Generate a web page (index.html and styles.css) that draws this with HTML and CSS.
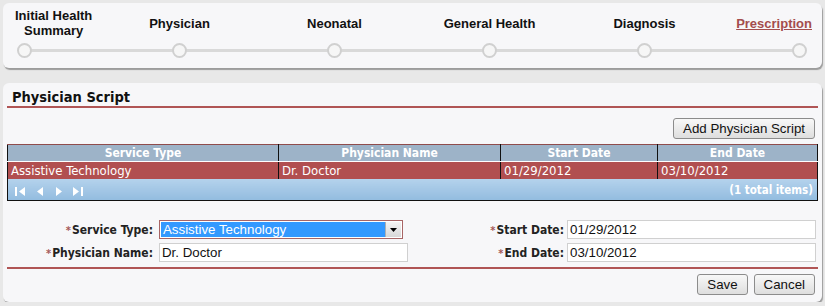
FILE: index.html
```html
<!DOCTYPE html>
<html lang="en">
<head>
    <meta charset="UTF-8">
    <title>Prescription</title>
    <link rel="stylesheet" href="styles.css">
</head>
<body>
    <div class="panel steps">
        <div class="step first">
            <span class="step-label">Initial Health<br>Summary</span>
            <span class="dot"></span>
        </div>
        <div class="step">
            <span class="step-label">Physician</span>
            <span class="dot"></span>
        </div>
        <div class="step">
            <span class="step-label">Neonatal</span>
            <span class="dot"></span>
        </div>
        <div class="step">
            <span class="step-label">General Health</span>
            <span class="dot"></span>
        </div>
        <div class="step">
            <span class="step-label">Diagnosis</span>
            <span class="dot"></span>
        </div>
        <div class="step last">
            <a class="step-label current" href="#">Prescription</a>
            <span class="dot"></span>
        </div>
    </div>

    <div class="panel script">
        <h2 class="section-title">Physician Script</h2>

        <div class="toolbar">
            <button class="btn">Add Physician Script</button>
        </div>

        <table class="grid">
            <thead>
                <tr>
                    <th class="col-type">Service Type</th>
                    <th class="col-name">Physician Name</th>
                    <th class="col-start">Start Date</th>
                    <th class="col-end">End Date</th>
                </tr>
            </thead>
            <tbody>
                <tr class="selected">
                    <td>Assistive Technology</td>
                    <td>Dr. Doctor</td>
                    <td>01/29/2012</td>
                    <td>03/10/2012</td>
                </tr>
            </tbody>
            <tfoot>
                <tr>
                    <td colspan="4">
                        <div class="pager">
                            <span class="pager-nav">
                                <svg width="11" height="9" viewBox="0 0 11 9"><rect x="0" y="0" width="2" height="9" fill="#fff"/><path d="M10 0 L10 9 L4 4.5 Z" fill="#fff"/></svg>
                                <svg width="7" height="9" viewBox="0 0 7 9"><path d="M6 0 L6 9 L0 4.5 Z" fill="#fff"/></svg>
                                <svg width="7" height="9" viewBox="0 0 7 9"><path d="M1 0 L1 9 L7 4.5 Z" fill="#fff"/></svg>
                                <svg width="10" height="9" viewBox="0 0 10 9"><path d="M0 0 L0 9 L6 4.5 Z" fill="#fff"/><rect x="8" y="0" width="2" height="9" fill="#fff"/></svg>
                            </span>
                            <span class="pager-info">(1 total items)</span>
                        </div>
                    </td>
                </tr>
            </tfoot>
        </table>

        <div class="form">
            <label class="field-label"><span class="req">*</span>Service Type:</label>
            <div class="select">
                <span class="select-value">Assistive Technology</span>
                <span class="select-arrow"><svg width="7" height="4" viewBox="0 0 7 4"><path d="M0 0 L7 0 L3.5 4 Z" fill="#000"/></svg></span>
            </div>
            <label class="field-label right"><span class="req">*</span>Start Date:</label>
            <input class="text-input" type="text" value="01/29/2012">

            <label class="field-label"><span class="req">*</span>Physician Name:</label>
            <input class="text-input" type="text" value="Dr. Doctor">
            <label class="field-label right"><span class="req">*</span>End Date:</label>
            <input class="text-input" type="text" value="03/10/2012">
        </div>

        <div class="actions">
            <button class="btn">Save</button>
            <button class="btn">Cancel</button>
        </div>
    </div>
</body>
</html>
```

FILE: styles.css
```css
body {
    margin: 0;
    padding: 3px 3px 0 3px;
    background: #e8e8e8;
    font-family: "DejaVu Sans Condensed", "DejaVu Sans", sans-serif;
    color: #111;
}
.panel {
    width: 819px;
    box-sizing: border-box;
    background: #f7f7f9;
    border-radius: 6px;
    box-shadow: 1px 2px 1px #9c9c9c;
}

/* wizard steps */
.steps {
    display: flex;
    justify-content: space-between;
    height: 65px;
    padding: 5px 15px 0 14px;
    background-image: linear-gradient(#d9d9d9, #d9d9d9);
    background-repeat: no-repeat;
    background-size: 775px 3px;
    background-position: 22px 46px;
    background-color: #f7f7f9;
}
.step {
    width: 15px;
    display: flex;
    flex-direction: column;
    align-items: center;
}
.step.first {
    align-items: flex-start;
}
.step.last {
    align-items: flex-end;
}
.step-label {
    height: 30px;
    display: flex;
    align-items: center;
    white-space: nowrap;
    text-align: center;
    font-family: "Liberation Sans", Arial, sans-serif;
    font-weight: bold;
    font-size: 13px;
    line-height: 15px;
    color: #111;
}
.step.first .step-label {
    margin-left: -2px;
}
.step.last .step-label {
    margin-right: -5px;
}
.step-label.current {
    color: #a44d4d;
    text-decoration: underline;
}
.dot {
    display: block;
    width: 15px;
    height: 15px;
    margin-top: 5px;
    box-sizing: border-box;
    border: 2px solid #d0d0d0;
    border-radius: 50%;
    background: #f6f6f6;
}

/* physician script */
.script {
    margin-top: 15px;
    height: 219px;
    padding: 0 4px;
}
.section-title {
    margin: 0;
    padding: 6px 0 0 5px;
    font-size: 14.5px;
    line-height: 17px;
    font-weight: bold;
    color: #111;
    border-bottom: 2px solid #b05555;
}
.toolbar {
    display: flex;
    justify-content: flex-end;
    padding: 10px 3px 0 0;
}
.btn {
    height: 21px;
    padding: 0 9px;
    font-family: "Liberation Sans", Arial, sans-serif;
    font-size: 13.3px;
    color: #111;
    background: linear-gradient(#f8f8f8, #dedede);
    border: 1px solid #8c8c8c;
    border-radius: 3px;
}

.grid {
    width: 811px;
    margin-top: 5px;
    border-collapse: collapse;
    table-layout: fixed;
    border: 1px solid #111;
    border-top-color: #8f4c4c;
    font-size: 13px;
    color: #fff;
}
.grid th {
    height: 16px;
    padding: 0;
    font-size: 12px;
    line-height: 15px;
    font-weight: bold;
    background: #9db3c8;
    border-left: 1px solid #111;
    border-bottom: 1px solid #fff;
}
.grid th:first-child,
.grid td:first-child {
    border-left: none;
}
.col-type { width: 270px; }
.col-name { width: 221px; }
.col-start { width: 156px; }
.grid tbody td {
    height: 17px;
    padding: 0 0 0 3px;
    line-height: 16px;
    background: #b14f50;
    border-left: 1px solid #111;
    text-align: left;
}
.grid tfoot td {
    height: 21px;
    padding: 0;
    background: linear-gradient(#b4d2ec, #93bcdf);
}
.pager {
    display: flex;
    justify-content: space-between;
    align-items: center;
    padding: 0 4px 0 7px;
}
.pager-nav {
    display: flex;
    align-items: center;
    gap: 11px;
    padding-top: 3px;
}
.pager-info {
    font-size: 11.5px;
    font-weight: bold;
}

/* form */
.form {
    display: grid;
    grid-template-columns: 152px 249px 159px 249px;
    row-gap: 4px;
    align-items: center;
    margin-top: 19px;
}
.field-label {
    padding-right: 6px;
    text-align: right;
    font-size: 12px;
    font-weight: bold;
    color: #222;
}
.field-label.right {
    padding-right: 3px;
}
.req {
    color: #a55a5a;
    font-size: 11px;
    margin-right: 1px;
}
.text-input {
    height: 19px;
    box-sizing: border-box;
    margin: 0;
    padding: 0 2px;
    border: 1px solid #d0d0d0;
    background: #fff;
    font-family: "Liberation Sans", Arial, sans-serif;
    font-size: 13.3px;
    color: #111;
}
.select {
    width: 244px;
    height: 19px;
    box-sizing: border-box;
    display: flex;
    padding: 1px;
    border: 1px solid #a86565;
    background: #fff;
}
.select-value {
    flex: 1;
    padding-left: 2px;
    background: #3399ff;
    color: #fff;
    font-family: "Liberation Sans", Arial, sans-serif;
    font-size: 13.3px;
    line-height: 15px;
}
.select-arrow {
    width: 15px;
    display: flex;
    align-items: center;
    justify-content: center;
    background: linear-gradient(#f4f4f4, #d8d8d8);
    border-left: 1px solid #b0b0b0;
}

.actions {
    display: flex;
    justify-content: flex-end;
    gap: 6px;
    margin-top: 5px;
    padding: 5px 3px 0 0;
    border-top: 2px solid #b05555;
}
```
